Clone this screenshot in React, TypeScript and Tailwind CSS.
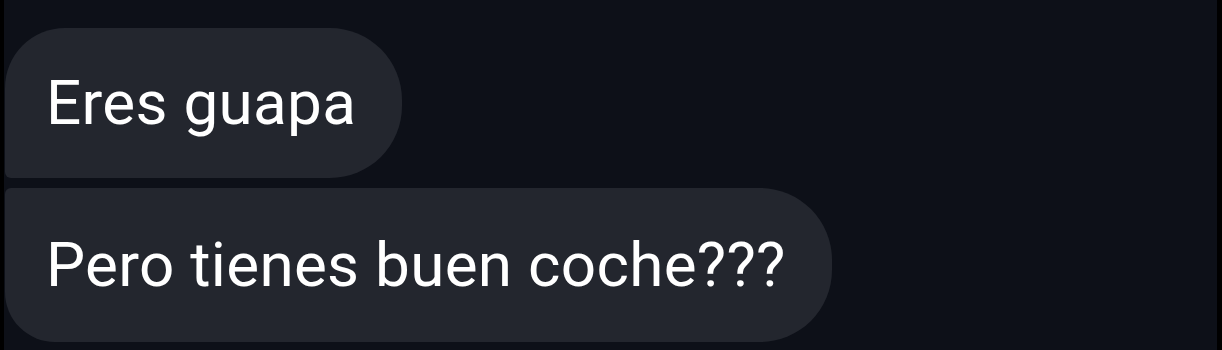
export default function App() {
  const messages = [
    { text: "Eres guapa", corners: "rounded-tl-[60px] rounded-bl-[6px] rounded-r-[72px]", height: "h-[150px]" },
    { text: "Pero tienes buen coche???", corners: "rounded-tl-[6px] rounded-bl-[50px] rounded-r-[72px]", height: "h-[154px]" },
  ];

  return (
    <div
      className="w-[1222px] h-[350px] bg-[#0d1018] border-l-[4px] border-r-[5px] border-black overflow-hidden"
      style={{ fontFamily: "Roboto, 'Noto Sans', sans-serif" }}
    >
      <div className="flex flex-col items-start gap-[10px] pt-[28px] pl-[1px]">
        {messages.map((m, i) => (
          <div
            key={i}
            className={`flex items-center bg-[#23262e] pl-[41px] pr-[46px] ${m.height} ${m.corners}`}
          >
            <span className="text-[62px] leading-none text-white tracking-[0.3px]">
              {m.text}
            </span>
          </div>
        ))}
      </div>
    </div>
  );
}
